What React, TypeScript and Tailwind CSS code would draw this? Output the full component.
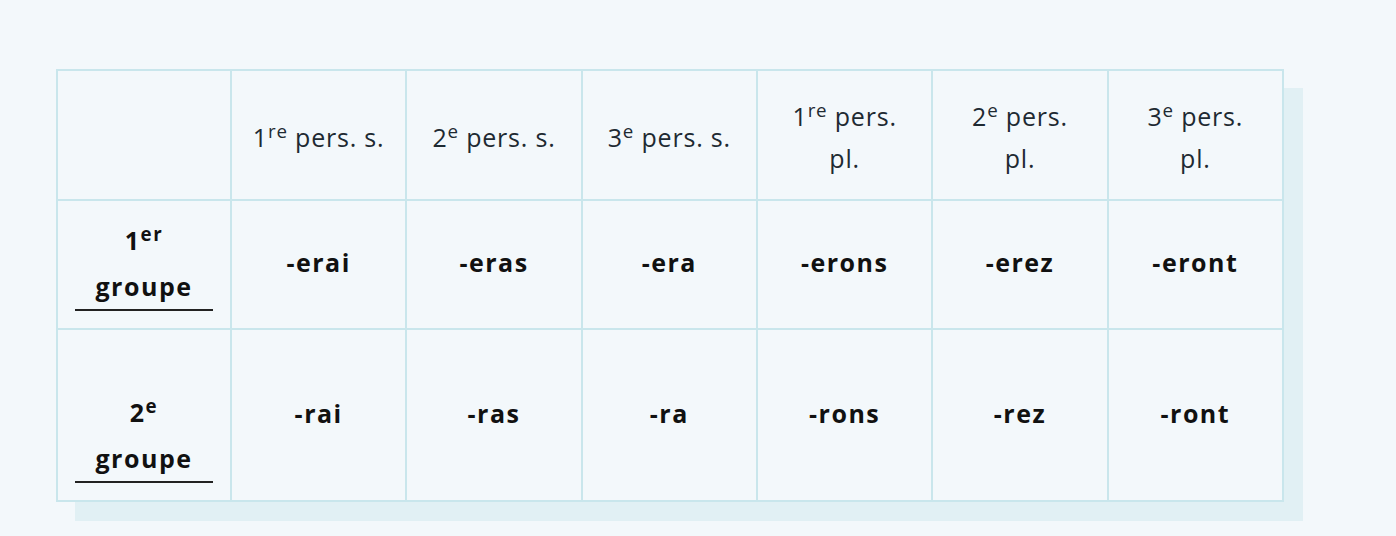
export default function App() {
  const heads: [string, string, string, string?][] = [
    ["1", "re", "pers. s."],
    ["2", "e", "pers. s."],
    ["3", "e", "pers. s."],
    ["1", "re", "pers.", "pl."],
    ["2", "e", "pers.", "pl."],
    ["3", "e", "pers.", "pl."],
  ];
  const rows = [
    { n: "1", sup: "er", cells: ["-erai", "-eras", "-era", "-erons", "-erez", "-eront"], extra: false },
    { n: "2", sup: "e", cells: ["-rai", "-ras", "-ra", "-rons", "-rez", "-ront"], extra: true },
  ];

  return (
    <div className="min-h-screen bg-[#f3f8fb] pl-[56px] pt-[69px]">
      <div className="w-[1228px] shadow-[19px_19px_0_0_#e1f0f4]">
        <table className="w-full table-fixed border-collapse border-2 border-[#c9e6ec] bg-[#f3f8fb]">
          <colgroup>
            <col className="w-[174px]" />
            <col />
            <col />
            <col />
            <col />
            <col />
            <col />
          </colgroup>
          <thead>
            <tr className="h-[130px]">
              <th className="border-2 border-[#c9e6ec]" />
              {heads.map((h, i) => (
                <th
                  key={i}
                  className="border-2 border-[#c9e6ec] px-1 pt-[4px] text-center align-middle font-['Open_Sans',sans-serif] text-[25px] font-normal leading-[42px] tracking-[0.8px] text-[#1e2a32]"
                >
                  {h[0]}
                  <sup>{h[1]}</sup> {h[2]}
                  {h[3] && (
                    <>
                      <br />
                      {h[3]}
                    </>
                  )}
                </th>
              ))}
            </tr>
          </thead>
          <tbody>
            {rows.map((r, i) => (
              <tr key={i}>
                <th
                  className={
                    "border-2 border-[#c9e6ec] px-[17px] pb-[17px] text-center font-['Open_Sans',sans-serif] text-[25px] font-bold leading-[47px] tracking-[1.5px] text-[#111] " +
                    (r.extra ? "pt-[59px]" : "pt-[16px]")
                  }
                >
                  <div>
                    {r.n}
                    <sup>{r.sup}</sup>
                  </div>
                  <div className="border-b-2 border-[#222] leading-[45px]">groupe</div>
                </th>
                {r.cells.map((c, j) => (
                  <td
                    key={j}
                    className="border-2 border-[#c9e6ec] pb-[3px] text-center align-middle font-['Open_Sans',sans-serif] text-[25px] font-bold tracking-[1.5px] text-[#111]"
                  >
                    {c}
                  </td>
                ))}
              </tr>
            ))}
          </tbody>
        </table>
      </div>
    </div>
  );
}
